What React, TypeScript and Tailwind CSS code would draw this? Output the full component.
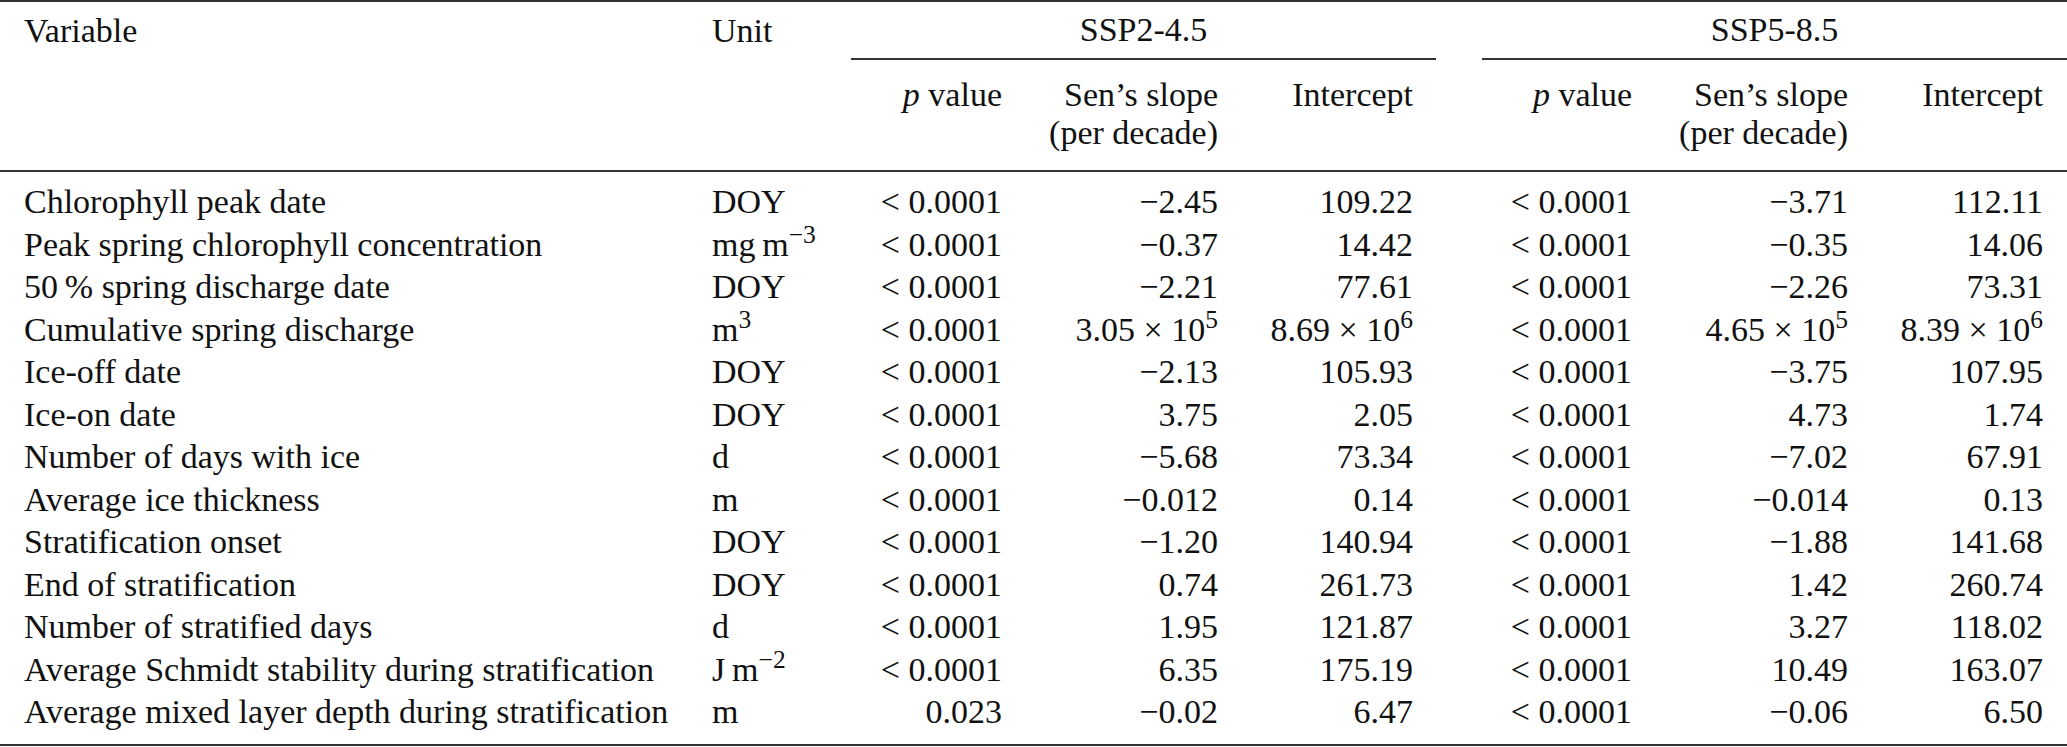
import type { ReactNode } from "react";

type Row = [ReactNode, ReactNode, ReactNode, ReactNode, ReactNode, ReactNode, ReactNode, ReactNode];

const sci = (m: string, e: number) => (
  <>
    {m} × 10<sup>{e}</sup>
  </>
);

const LT = "< 0.0001";

const ROWS: Row[] = [
  ["Chlorophyll peak date", "DOY", LT, "−2.45", "109.22", LT, "−3.71", "112.11"],
  ["Peak spring chlorophyll concentration", <>mg{"\u2009"}m<sup>−3</sup></>, LT, "−0.37", "14.42", LT, "−0.35", "14.06"],
  ["50\u2009% spring discharge date", "DOY", LT, "−2.21", "77.61", LT, "−2.26", "73.31"],
  ["Cumulative spring discharge", <>m<sup>3</sup></>, LT, sci("3.05", 5), sci("8.69", 6), LT, sci("4.65", 5), sci("8.39", 6)],
  ["Ice-off date", "DOY", LT, "−2.13", "105.93", LT, "−3.75", "107.95"],
  ["Ice-on date", "DOY", LT, "3.75", "2.05", LT, "4.73", "1.74"],
  ["Number of days with ice", "d", LT, "−5.68", "73.34", LT, "−7.02", "67.91"],
  ["Average ice thickness", "m", LT, "−0.012", "0.14", LT, "−0.014", "0.13"],
  ["Stratification onset", "DOY", LT, "−1.20", "140.94", LT, "−1.88", "141.68"],
  ["End of stratification", "DOY", LT, "0.74", "261.73", LT, "1.42", "260.74"],
  ["Number of stratified days", "d", LT, "1.95", "121.87", LT, "3.27", "118.02"],
  ["Average Schmidt stability during stratification", <>J{"\u2009"}m<sup>−2</sup></>, LT, "6.35", "175.19", LT, "10.49", "163.07"],
  ["Average mixed layer depth during stratification", "m", "0.023", "−0.02", "6.47", LT, "−0.06", "6.50"],
];

function SubHead({ last }: { last?: boolean }) {
  return (
    <>
      <th className="pt-[16px] pb-[18px] pr-[23px] text-right align-top font-normal border-b-2 border-[#333]">
        <i>p</i> value
      </th>
      <th className="pt-[16px] pb-[18px] pr-[23px] text-right align-top font-normal border-b-2 border-[#333]">
        Sen’s slope
        <br />
        (per decade)
      </th>
      <th
        className={`pt-[16px] pb-[18px] text-right align-top font-normal border-b-2 border-[#333] ${
          last ? "pr-[24px]" : "pr-[23px]"
        }`}
      >
        Intercept
      </th>
    </>
  );
}

export default function App() {
  return (
    <div className="w-[2067px] h-[747px] bg-white">
      <table className="w-[2067px] table-fixed border-separate border-spacing-0 border-t-2 border-[#333] font-['Liberation_Serif','Times_New_Roman',serif] text-[34px] leading-[38px] text-[#111]">
        <colgroup>
          <col className="w-[700px]" />
          <col className="w-[151px]" />
          <col className="w-[174px]" />
          <col className="w-[216px]" />
          <col className="w-[195px]" />
          <col className="w-[46px]" />
          <col className="w-[173px]" />
          <col className="w-[216px]" />
          <col className="w-[196px]" />
        </colgroup>
        <thead>
          <tr className="h-[58px]">
            <th rowSpan={2} className="pl-[24px] pt-[10px] text-left align-top font-normal border-b-2 border-[#333]">
              Variable
            </th>
            <th rowSpan={2} className="pl-[12px] pt-[10px] text-left align-top font-normal border-b-2 border-[#333]">
              Unit
            </th>
            <th colSpan={3} className="text-center align-middle font-normal border-b-2 border-[#333]">
              SSP2-4.5
            </th>
            <th rowSpan={2} className="border-b-2 border-[#333]" />
            <th colSpan={3} className="text-center align-middle font-normal border-b-2 border-[#333]">
              SSP5-8.5
            </th>
          </tr>
          <tr>
            <SubHead />
            <SubHead last />
          </tr>
        </thead>
        <tbody>
          {ROWS.map((r, i) => {
            const first = i === 0;
            const last = i === ROWS.length - 1;
            const pad = first ? "pt-[9px]" : last ? "pb-[10.5px] border-b-2 border-[#333]" : "";
            return (
              <tr key={i}>
                <td className={`pl-[24px] h-[42.5px] leading-[42.5px] text-left whitespace-nowrap ${pad}`}>{r[0]}</td>
                <td className={`pl-[12px] leading-[42.5px] text-left whitespace-nowrap ${pad}`}>{r[1]}</td>
                <td className={`pr-[23px] leading-[42.5px] text-right whitespace-nowrap ${pad}`}>{r[2]}</td>
                <td className={`pr-[23px] leading-[42.5px] text-right whitespace-nowrap ${pad}`}>{r[3]}</td>
                <td className={`pr-[23px] leading-[42.5px] text-right whitespace-nowrap ${pad}`}>{r[4]}</td>
                <td className={pad} />
                <td className={`pr-[23px] leading-[42.5px] text-right whitespace-nowrap ${pad}`}>{r[5]}</td>
                <td className={`pr-[23px] leading-[42.5px] text-right whitespace-nowrap ${pad}`}>{r[6]}</td>
                <td className={`pr-[24px] leading-[42.5px] text-right whitespace-nowrap ${pad}`}>{r[7]}</td>
              </tr>
            );
          })}
        </tbody>
      </table>
    </div>
  );
}
